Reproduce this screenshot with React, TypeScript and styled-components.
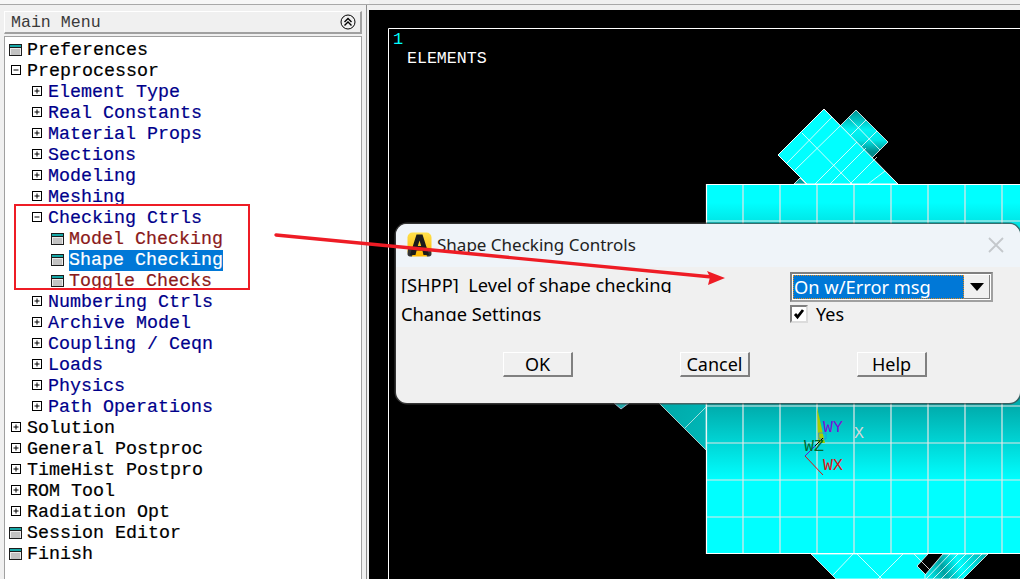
import React from 'react';
import styled, { createGlobalStyle } from 'styled-components';

interface MenuItem {
  label: string;
  level: number;
  kind: 'plus' | 'minus' | 'calc';
  selected?: boolean;
}

const menu: Array<MenuItem> = [
  { label: 'Preferences', level: 0, kind: 'calc' },
  { label: 'Preprocessor', level: 0, kind: 'minus' },
  { label: 'Element Type', level: 1, kind: 'plus' },
  { label: 'Real Constants', level: 1, kind: 'plus' },
  { label: 'Material Props', level: 1, kind: 'plus' },
  { label: 'Sections', level: 1, kind: 'plus' },
  { label: 'Modeling', level: 1, kind: 'plus' },
  { label: 'Meshing', level: 1, kind: 'plus' },
  { label: 'Checking Ctrls', level: 1, kind: 'minus' },
  { label: 'Model Checking', level: 2, kind: 'calc' },
  { label: 'Shape Checking', level: 2, kind: 'calc', selected: true },
  { label: 'Toggle Checks', level: 2, kind: 'calc' },
  { label: 'Numbering Ctrls', level: 1, kind: 'plus' },
  { label: 'Archive Model', level: 1, kind: 'plus' },
  { label: 'Coupling / Ceqn', level: 1, kind: 'plus' },
  { label: 'Loads', level: 1, kind: 'plus' },
  { label: 'Physics', level: 1, kind: 'plus' },
  { label: 'Path Operations', level: 1, kind: 'plus' },
  { label: 'Solution', level: 0, kind: 'plus' },
  { label: 'General Postproc', level: 0, kind: 'plus' },
  { label: 'TimeHist Postpro', level: 0, kind: 'plus' },
  { label: 'ROM Tool', level: 0, kind: 'plus' },
  { label: 'Radiation Opt', level: 0, kind: 'plus' },
  { label: 'Session Editor', level: 0, kind: 'calc' },
  { label: 'Finish', level: 0, kind: 'calc' }
];

const levelColors = ['#000000', '#00008b', '#8b1a1a'];

const GlobalStyle = createGlobalStyle`
  html, body {
    margin: 0;
    padding: 0;
    background: #f0f0f0;
    overflow: hidden;
  }
`;

const Page = styled.div`
  position: relative;
  display: flex;
  width: 1020px;
  height: 579px;
  overflow: hidden;
`;

const Sidebar = styled.div`
  display: flex;
  flex-direction: column;
  box-sizing: border-box;
  width: 369px;
  height: 579px;
  padding: 11px 0 0 4px;
  background: #f0f0f0;
  box-shadow: inset 0 4px 0 #f6f6f6, inset 0 5px 0 #a8a8a8, inset -2px 0 0 #f0f0f0, inset -3px 0 0 #8c8c8c,
    inset 1px 0 0 #f0f0f0;
`;

const TitleBar = styled.div`
  display: flex;
  align-items: center;
  justify-content: space-between;
  box-sizing: border-box;
  width: 358px;
  height: 23px;
  padding: 0 4px 0 6px;
  background: #f0f0f0;
  border-top: 1px solid #fff;
  border-left: 1px solid #fff;
  border-right: 2px solid #a0a0a0;
  border-bottom: 2px solid #a0a0a0;
  color: #3a3a3a;
  font: 16.6px 'Liberation Mono', monospace;
`;

const TreeBox = styled.div`
  flex: 1;
  box-sizing: border-box;
  width: 358px;
  margin-top: 2px;
  padding-top: 3px;
  background: #fff;
  border: 1px solid #a0a0a0;
  border-bottom: none;
`;

const Row = styled.div<{ $level: number }>`
  display: flex;
  align-items: center;
  height: 21px;
  padding-left: ${p => 4 + p.$level * 21}px;
`;

const Marker = styled.span`
  display: flex;
  align-items: center;
  box-sizing: border-box;
  width: 18px;
  height: 21px;
  padding-bottom: 2px;
  flex-shrink: 0;
`;

const Label = styled.span<{ $level: number; $selected?: boolean }>`
  white-space: pre;
  font: 18.33px/21px 'Liberation Mono', monospace;
  -webkit-text-stroke: 0.2px currentColor;
  color: ${p => (p.$selected ? '#fff' : levelColors[p.$level])};
  background: ${p => (p.$selected ? '#0078d7' : 'transparent')};
`;

const Viewport = styled.div`
  position: relative;
  flex: 1;
  margin-top: 10px;
  background: #000;
  box-shadow: 0 -5px 0 #f0f0f0, 0 -6px 0 #a8a8a8;
`;

const Canvas = styled.svg`
  position: absolute;
  inset: 0;
  display: block;
`;

const Dialog = styled.div`
  position: absolute;
  left: 396px;
  top: 224px;
  display: flex;
  flex-direction: column;
  width: 624px;
  height: 179px;
  overflow: hidden;
  background: #f0f0f0;
  border-radius: 11px;
  box-shadow: 0 0 0 1.5px rgba(70, 70, 70, 0.75);
  color: #000;
  font: 18.3px 'Noto Sans', 'Open Sans', sans-serif;
`;

const DialogHeader = styled.div`
  display: flex;
  align-items: center;
  justify-content: space-between;
  box-sizing: border-box;
  height: 43px;
  padding: 0 16px 2px 11px;
  background: #eff4f9;
`;

const DialogTitle = styled.div`
  display: flex;
  align-items: center;
  gap: 5px;
  color: #222;
  font-size: 17px;
`;

const DialogBody = styled.div`
  display: grid;
  grid-template-columns: 394px 1fr;
  grid-template-rows: 33px 20px;
  padding: 5px 0 0;
`;

// the labels are cut short by their row, as in the original Tk dialog
const FieldLabel = styled.div<{ $height: number; $lineHeight: number }>`
  height: ${p => p.$height}px;
  overflow: hidden;
  padding-left: 5px;
  line-height: ${p => p.$lineHeight}px;
  white-space: pre;
`;

const Combo = styled.div`
  display: flex;
  box-sizing: border-box;
  width: 203px;
  height: 30px;
  padding: 1px;
  border: 2px solid #808080;
  border-right-color: #a0a0a0;
  border-bottom-color: #a0a0a0;
  background: #fff;
`;

const ComboValue = styled.div`
  flex: 1;
  box-sizing: border-box;
  height: 100%;
  padding-left: 1px;
  background: #0078d7;
  outline: 1px dotted #e08a1e;
  outline-offset: -1px;
  color: #fff;
  font-size: 18.3px;
  line-height: 24px;
`;

const ComboArrow = styled.div`
  display: flex;
  align-items: center;
  justify-content: center;
  width: 25px;
  background: #f0f0f0;
  border-right: 1px solid #808080;
  border-bottom: 1px solid #808080;
`;

const CheckRow = styled.div`
  display: flex;
  align-items: center;
  gap: 8px;
  height: 18px;
  font-size: 18px;
  line-height: 18px;
`;

const CheckBox = styled.span`
  display: flex;
  align-items: center;
  justify-content: center;
  box-sizing: border-box;
  width: 18px;
  height: 18px;
  background: #fff;
  border: 2px solid #dcdcdc;
  border-top-color: #808080;
  border-left-color: #808080;
`;

const ButtonRow = styled.div`
  display: flex;
  gap: 107px;
  padding: 27px 0 0 107px;
`;

const Button = styled.button`
  box-sizing: border-box;
  width: 70px;
  height: 25px;
  padding: 0;
  background: #f0f0f0;
  border: 1px solid #fff;
  border-right: 2px solid #808080;
  border-bottom: 2px solid #808080;
  color: #000;
  font: 18px/22px 'Noto Sans', 'Open Sans', sans-serif;
`;

const Callout = styled.div`
  position: absolute;
  left: 14px;
  top: 204px;
  width: 232px;
  height: 82px;
  border: 2px solid #ee1c25;
`;

const ArrowLayer = styled.svg`
  position: absolute;
  left: 0;
  top: 0;
  pointer-events: none;
`;

const TreeSign = ({ open }: { open: boolean }) => (
  <svg width="11" height="11" viewBox="0 0 11 11" style={{ marginLeft: 2 }}>
    <rect x="0.5" y="0.5" width="9" height="9" fill="#fff" stroke="#000" />
    <path d="M2.5 5H7.5" stroke="#000" />
    {!open && <path d="M5 2.5V7.5" stroke="#000" />}
  </svg>
);

const CalcIcon = () => (
  <svg width="13" height="12" viewBox="0 0 13 12">
    <rect x="0.5" y="0.5" width="12" height="11" fill="#ececec" stroke="#1c1c1c" />
    <rect x="1" y="1" width="11" height="2.5" fill="#17a7a7" />
    <path d="M1 3.5H12" stroke="#1c1c1c" strokeWidth="1" />
    <path d="M2.5 6H11M2.5 8H11M2.5 10H11" stroke="#444" strokeDasharray="1 1" />
  </svg>
);

const CollapseIcon = () => (
  <svg width="16" height="16" viewBox="0 0 16 16">
    <circle cx="8" cy="8" r="7" fill="#f0f0f0" stroke="#000" />
    <path d="M4.5 8L8 4.5L11.5 8M4.5 11.5L8 8L11.5 11.5" fill="none" stroke="#000" strokeWidth="1.4" />
  </svg>
);

const Logo = () => (
  <svg width="25" height="25" viewBox="0 0 25 25">
    <defs>
      <linearGradient id="logoFill" x1="0" y1="0" x2="0" y2="1">
        <stop offset="0" stopColor="#ffe14d" />
        <stop offset="1" stopColor="#ffb700" />
      </linearGradient>
    </defs>
    <rect x="0.5" y="0.5" width="24" height="24" rx="5" fill="url(#logoFill)" />
    <path d="M1 17L7 17L5 24.5H3C1.5 24.5 0.5 23.5 0.5 22ZM24 17H18L20 24.5H22C23.5 24.5 24.5 23.5 24.5 22Z" fill="#333" />
    <path d="M9.5 2.5H15.5L22 23H16.5L15.4 18.5H9.6L8.5 23H3ZM12.5 8.5L10.8 14H14.2Z" fill="#1b1b1b" fillRule="evenodd" />
  </svg>
);

const CloseIcon = () => (
  <svg width="16" height="16" viewBox="0 0 16 16">
    <path d="M1 1L15 15M15 1L1 15" stroke="#c4c8cc" strokeWidth="1.8" />
  </svg>
);

// grid of the big block, 37px pitch
const blockX = [743, 780, 817, 854, 891, 928, 965, 1002];
const blockY = [221, 258, 295, 332, 369, 406, 443, 480, 517];

const MeshDrawing = () => (
  <Canvas width="651" height="569" viewBox="369 10 651 569">
    <defs>
      <linearGradient id="blockFill" gradientUnits="userSpaceOnUse" x1="0" y1="184" x2="0" y2="554">
        <stop offset="0.05" stopColor="#00ffff" />
        <stop offset="0.12" stopColor="#00dede" />
        <stop offset="0.6" stopColor="#00acac" />
        <stop offset="0.8" stopColor="#00ffff" />
      </linearGradient>
      <linearGradient id="smallFill" gradientUnits="userSpaceOnUse" x1="0" y1="112" x2="0" y2="152">
        <stop offset="0" stopColor="#009a9a" />
        <stop offset="0.45" stopColor="#00f4f4" />
        <stop offset="0.7" stopColor="#00e8e8" />
        <stop offset="1" stopColor="#008c8c" />
      </linearGradient>
      <linearGradient id="tealFill" gradientUnits="userSpaceOnUse" x1="660" y1="403" x2="706" y2="440">
        <stop offset="0" stopColor="#00a8a8" />
        <stop offset="1" stopColor="#00b8b8" />
      </linearGradient>
      <linearGradient id="stripeFill" gradientUnits="userSpaceOnUse" x1="925" y1="579" x2="988" y2="554">
        <stop offset="0" stopColor="#00ffff" />
        <stop offset="0.3" stopColor="#00a0a0" />
        <stop offset="0.55" stopColor="#00ffff" />
        <stop offset="1" stopColor="#00a8a8" />
      </linearGradient>
    </defs>

    <path d="M388.5 579V28.5H1020" fill="none" stroke="#fff" />
    <text x="393" y="44" fill="#00ffff" fontFamily="Liberation Mono, monospace" fontSize="17">1</text>
    <text x="407" y="63" fill="#fff" fontFamily="Liberation Mono, monospace" fontSize="16.6">ELEMENTS</text>

    <polygon points="856,110 888,142 866,164 834,132" fill="url(#smallFill)" stroke="#fff" strokeWidth="0.8" />
    <path d="M849 118L880 150M866 120L842 144M877 131L856 152" stroke="#fff" strokeWidth="0.8" />
    <polygon points="800,178 806,184 794,184" fill="#009c9c" stroke="#fff" strokeWidth="0.8" />
    <polygon points="824,109 778,155 807,184 898,184" fill="#00ffff" stroke="#fff" />
    <path d="M787 163L832 117M795 170L841 125M815 184L857 142M830 184L866 148M850 184L877 157M868 184L885 171M802 133L852 184" stroke="#fff" strokeWidth="0.8" />

    <polygon points="706,184 1020,184 1020,554 706,554" fill="url(#blockFill)" />
    <path
      d={blockX.map(x => `M${x} 184V554`).join('') + blockY.map(y => `M706 ${y}H1020`).join('')}
      stroke="#e6e6e6"
      strokeWidth="1.2"
    />
    <path d="M706.5 554V184.5H1020M706 553.5H1020" fill="none" stroke="#fff" strokeWidth="1.2" />

    <polygon points="659,403 706,403 706,450" fill="url(#tealFill)" stroke="#d0e8e8" strokeWidth="0.8" />
    <path d="M685 428L706 407" stroke="#d0e8e8" strokeWidth="0.8" />
    <path d="M614 403L621 409L629 403Z" fill="#2aa" stroke="#cce" strokeWidth="0.8" />

    <polygon points="811,554 928,554 917,566 930,579 836,579" fill="#00ffff" stroke="#fff" strokeWidth="0.8" />
    <path d="M853 554L833 575M857 554L882 579M903 554L878 579M914 554L939 579" stroke="#fff" strokeWidth="0.8" />
    <polygon points="943,554 988,554 963,579 925,579 925,575" fill="url(#stripeFill)" stroke="#fff" strokeWidth="0.8" />
    <path d="M950 554L926 579M958 554L933 579M966 554L941 579M974 554L949 579M982 554L957 579" stroke="#fff" strokeWidth="0.8" />

    <polygon points="817,407 825,443 818,443" fill="#a8cc00" />
    <path d="M818.5 433H826V439H819Z" fill="none" stroke="#2a8ce0" strokeWidth="0.8" />
    <path d="M805 456L823 475" stroke="#e01010" />
    <path d="M805 456L815 446" stroke="#6a10d0" />
    <path d="M815 446L823 438" stroke="#000" />
    <text x="823" y="432" fill="#7a10d8" fontFamily="Liberation Mono, monospace" fontSize="16.6">WY</text>
    <text x="823" y="470" fill="#e01010" fontFamily="Liberation Mono, monospace" fontSize="16.6">WX</text>
    <text x="804" y="451" fill="#006a30" fontFamily="Liberation Mono, monospace" fontSize="16.6">WZ</text>
    <text x="854" y="438" fill="#d8d8d8" fontFamily="Liberation Mono, monospace" fontSize="16.6">X</text>
  </Canvas>
);

const App = () => (
  <Page>
    <GlobalStyle />
    <Sidebar>
      <TitleBar>
        Main Menu
        <CollapseIcon />
      </TitleBar>
      <TreeBox>
        {menu.map(item => (
          <Row key={item.label} $level={item.level}>
            <Marker>
              {item.kind === 'calc' ? <CalcIcon /> : <TreeSign open={item.kind === 'minus'} />}
            </Marker>
            <Label $level={item.level} $selected={item.selected}>
              {item.label}
            </Label>
          </Row>
        ))}
      </TreeBox>
    </Sidebar>
    <Viewport>
      <MeshDrawing />
    </Viewport>

    <Dialog>
      <DialogHeader>
        <DialogTitle>
          <Logo />
          Shape Checking Controls
        </DialogTitle>
        <CloseIcon />
      </DialogHeader>
      <DialogBody>
        <FieldLabel $height={21} $lineHeight={26}>[SHPP]  Level of shape checking</FieldLabel>
        <Combo>
          <ComboValue>On w/Error msg</ComboValue>
          <ComboArrow>
            <svg width="14" height="8" viewBox="0 0 14 8">
              <polygon points="0,0 14,0 7,8" fill="#000" />
            </svg>
          </ComboArrow>
        </Combo>
        <FieldLabel $height={16} $lineHeight={18}>Change Settings</FieldLabel>
        <CheckRow>
          <CheckBox>
            <svg width="12" height="12" viewBox="0 0 12 12">
              <path d="M2 6L4.5 9L10 2" fill="none" stroke="#000" strokeWidth="2.8" />
            </svg>
          </CheckBox>
          Yes
        </CheckRow>
      </DialogBody>
      <ButtonRow>
        <Button>OK</Button>
        <Button>Cancel</Button>
        <Button>Help</Button>
      </ButtonRow>
    </Dialog>

    <Callout />
    <ArrowLayer width="1020" height="579" viewBox="0 0 1020 579">
      <path d="M276 235L712 277" stroke="#ee1c25" strokeWidth="3.4" strokeLinecap="round" />
      <polygon points="725,278 707,271 710,277 708,285" fill="#ee1c25" />
    </ArrowLayer>
  </Page>
);

export default App;
